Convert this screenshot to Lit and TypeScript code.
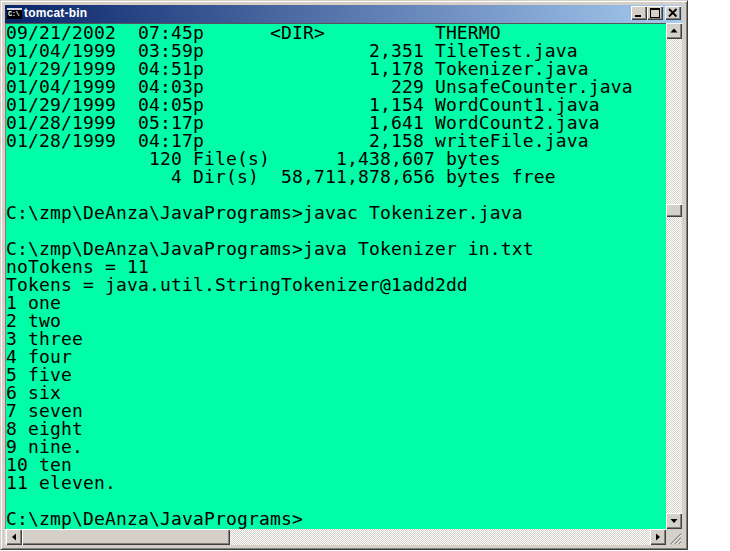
import { LitElement, html, css } from "lit";
import { customElement } from "lit/decorators.js";

const TEXT = `09/21/2002  07:45p      <DIR>          THERMO
01/04/1999  03:59p               2,351 TileTest.java
01/29/1999  04:51p               1,178 Tokenizer.java
01/04/1999  04:03p                 229 UnsafeCounter.java
01/29/1999  04:05p               1,154 WordCount1.java
01/28/1999  05:17p               1,641 WordCount2.java
01/28/1999  04:17p               2,158 writeFile.java
             120 File(s)      1,438,607 bytes
               4 Dir(s)  58,711,878,656 bytes free

C:\\zmp\\DeAnza\\JavaPrograms>javac Tokenizer.java

C:\\zmp\\DeAnza\\JavaPrograms>java Tokenizer in.txt
noTokens = 11
Tokens = java.util.StringTokenizer@1add2dd
1 one
2 two
3 three
4 four
5 five
6 six
7 seven
8 eight
9 nine.
10 ten
11 eleven.

C:\\zmp\\DeAnza\\JavaPrograms>`;

@customElement("app-root")
export class AppRoot extends LitElement {
  static styles = css`
    :host { display: block; width: 730px; height: 551px; background: #fff; overflow: hidden; }
    .window {
      box-sizing: border-box; width: 688px; height: 550px; background: #d4d0c8;
      border: 1px solid; border-color: #d4d0c8 #404040 #404040 #d4d0c8;
      box-shadow: inset 1px 1px 0 #fff, inset -1px -1px 0 #808080;
      padding: 4px 5px 4px 4px; display: flex; flex-direction: column;
    }
    .title {
      height: 18px; flex: none; display: flex; align-items: center; padding: 0 1px 0 2px;
      background: linear-gradient(90deg, #0a246a, #a6caf0); color: #fff;
      font: bold 12px "Liberation Sans", Arial, sans-serif;
    }
    .icon { width: 15px; height: 11px; background: #000; border-top: 2px solid #d8d8e8; box-sizing: border-box;
      color: #fff; font: bold 7px/9px "Liberation Mono", monospace; margin: 0 2px 2px 0; overflow: hidden; padding-left: 1px; letter-spacing: -0.5px; }
    .name { flex: 1; letter-spacing: 0.2px; margin-bottom: 2px; }
    .tb {
      width: 16px; height: 14px; box-sizing: border-box; background: #d4d0c8; display: flex; align-items: center; justify-content: center;
      margin-bottom: 2px;
      box-shadow: inset 1px 1px 0 #fff, inset -1px -1px 0 #404040, inset -2px -2px 0 #808080;
    }
    .tb svg { display: block; }
    .close { margin-left: 2px; }
    .body { flex: 1; display: grid; grid-template-columns: 661px 16px; grid-template-rows: 506px 16px; min-height: 0; }
    .term {
      background: #00fda8; color: #000; margin: 0; overflow: hidden; padding-top: 0;
      font: 18px/18px "DejaVu Sans Mono", monospace; letter-spacing: 0.16px; white-space: pre;
      border-top: 1px solid #555; border-left: 1px solid #808080;
    }
    .track {
      background-color: #fff;
      background-image: repeating-conic-gradient(#d4d0c8 0 25%, #fff 0 50%);
      background-size: 2px 2px;
    }
    .v { display: flex; flex-direction: column; }
    .h { display: flex; }
    .btn {
      width: 16px; height: 16px; flex: none; box-sizing: border-box; background: #d4d0c8;
      display: flex; align-items: center; justify-content: center;
      box-shadow: inset 1px 1px 0 #fff, inset -1px -1px 0 #404040, inset -2px -2px 0 #808080;
    }
    .first { margin-left: 1px; }
    .vspace1 { height: 165px; flex: none; }
    .vspace2 { flex: 1; }
    .hspace { flex: 1; }
    .vthumb { height: 13px; flex: none; background: #d4d0c8; box-shadow: inset 1px 1px 0 #fff, inset -1px -1px 0 #404040, inset -2px -2px 0 #808080; }
    .hthumb { width: 208px; flex: none; background: #d4d0c8; box-shadow: inset 1px 1px 0 #fff, inset -1px -1px 0 #404040, inset -2px -2px 0 #808080; }
    .grip { background: #d4d0c8; display: flex; align-items: flex-end; justify-content: flex-end; }
  `;

  private arrow(points: string) {
    return html`<svg width="8" height="8" viewBox="0 0 8 8"><polygon points=${points} fill="#000"></polygon></svg>`;
  }

  render() {
    return html`
      <div class="window">
        <div class="title">
          <div class="icon">C:\\</div>
          <div class="name">tomcat-bin</div>
          <div class="tb"><svg width="10" height="10" viewBox="0 0 10 10"><rect x="1" y="7" width="6" height="2" fill="#000"></rect></svg></div>
          <div class="tb"><svg width="10" height="10" viewBox="0 0 10 10"><path d="M0 0H10V10H0ZM1 2V9H9V2Z" fill="#000" fill-rule="evenodd"></path></svg></div>
          <div class="tb close"><svg width="10" height="10" viewBox="0 0 10 10"><path d="M1 1L8.5 8.5M8.5 1L1 8.5" stroke="#000" stroke-width="1.8"></path></svg></div>
        </div>
        <div class="body">
          <pre class="term">${TEXT}</pre>
          <div class="v track">
            <div class="btn">${this.arrow("4,1.5 0.5,5.5 7.5,5.5")}</div>
            <div class="vspace1"></div>
            <div class="vthumb"></div>
            <div class="vspace2"></div>
            <div class="btn">${this.arrow("0.5,2 7.5,2 4,6")}</div>
          </div>
          <div class="h track">
            <div class="btn first">${this.arrow("2,4 6,0.5 6,7.5")}</div>
            <div class="hthumb"></div>
            <div class="hspace"></div>
            <div class="btn">${this.arrow("2,0.5 6,4 2,7.5")}</div>
          </div>
          <div class="grip">
            <svg width="13" height="13" viewBox="0 0 13 13">
              <path d="M12 2L2 12M12 6L6 12M12 10L10 12" stroke="#808080" stroke-width="1.2" fill="none"></path>
              <path d="M12 3L3 12M12 7L7 12M12 11L11 12" stroke="#fff" stroke-width="0.8" fill="none"></path>
            </svg>
          </div>
        </div>
      </div>
    `;
  }
}
